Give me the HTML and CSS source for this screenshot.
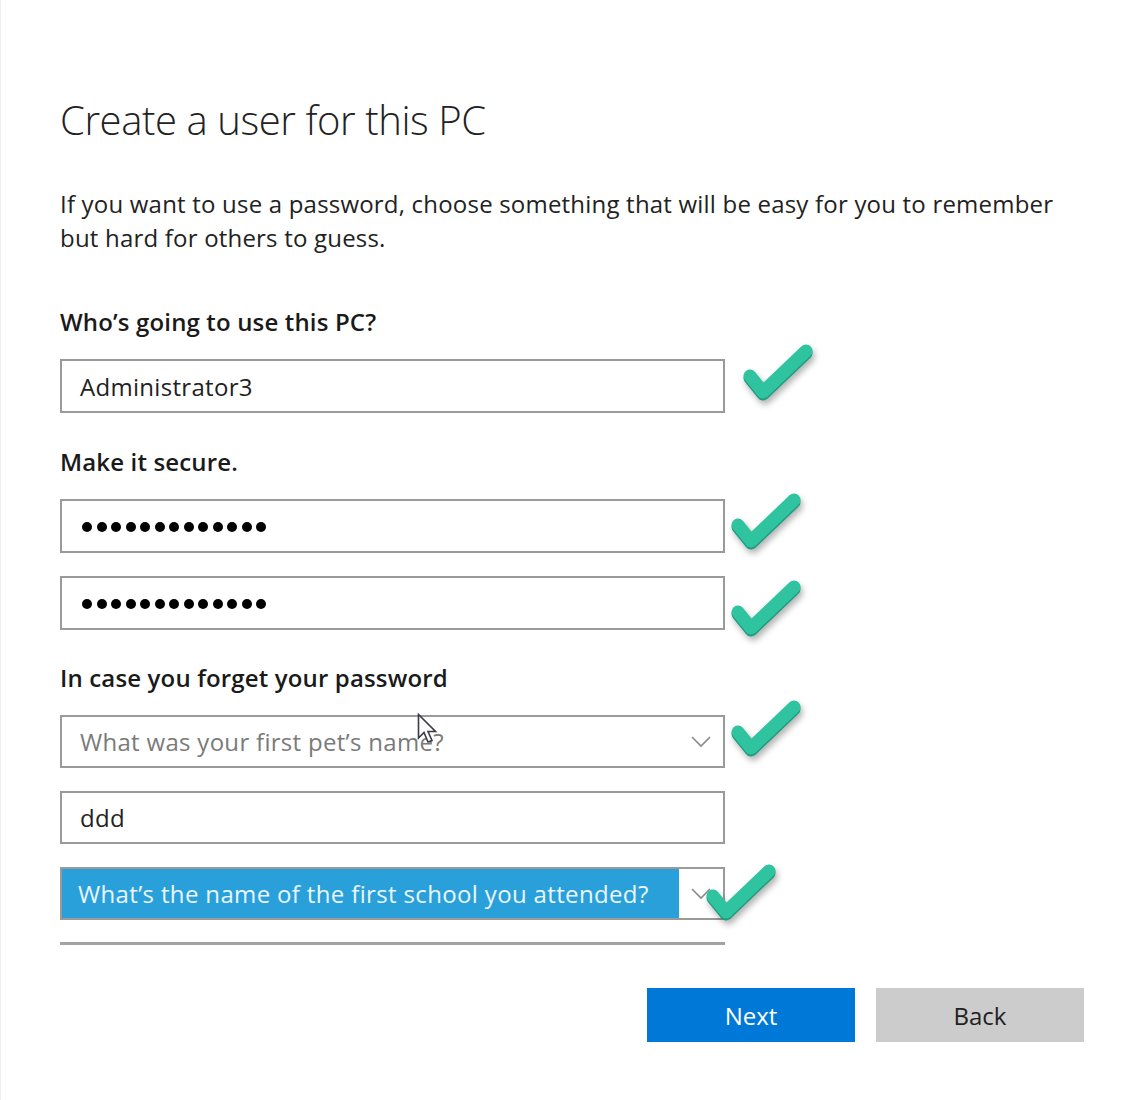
FILE: index.html
```html
<!DOCTYPE html>
<html lang="en">
<head>
<meta charset="utf-8">
<title>Create a user for this PC</title>
<link rel="stylesheet" href="styles.css">
</head>
<body>
<main class="page">
  <h1 class="title">Create a user for this PC</h1>
  <p class="intro">If you want to use a password, choose something that will be easy for you to remember but hard for others to guess.</p>

  <div class="label label-who">Who’s going to use this PC?</div>
  <div class="field">
    <div class="box">Administrator3</div>
    <svg class="check check-1" viewBox="0 0 80 70" width="80" height="70" aria-hidden="true"><path class="ck-side" d="M10 38 L23 54 L66 13"/><path class="ck-top" d="M10 36 L23 52 L66 11"/></svg>
  </div>

  <div class="label label-secure">Make it secure.</div>
  <div class="field">
    <div class="box" aria-label="password"><span class="dots"><i></i><i></i><i></i><i></i><i></i><i></i><i></i><i></i><i></i><i></i><i></i><i></i><i></i></span></div>
    <svg class="check check-2" viewBox="0 0 80 70" width="80" height="70" aria-hidden="true"><path class="ck-side" d="M10 38 L23 54 L66 13"/><path class="ck-top" d="M10 36 L23 52 L66 11"/></svg>
  </div>
  <div class="field gap">
    <div class="box" aria-label="confirm password"><span class="dots"><i></i><i></i><i></i><i></i><i></i><i></i><i></i><i></i><i></i><i></i><i></i><i></i><i></i></span></div>
    <svg class="check check-3" viewBox="0 0 80 70" width="80" height="70" aria-hidden="true"><path class="ck-side" d="M10 38 L23 54 L66 13"/><path class="ck-top" d="M10 36 L23 52 L66 11"/></svg>
  </div>

  <div class="label label-forget">In case you forget your password</div>
  <div class="field">
    <div class="box short select placeholder"><span class="sel-text">What was your first pet’s name?</span>
      <span class="chev"><svg viewBox="0 0 20 12" width="20" height="12"><path d="M1 1 L10 10 L19 1"/></svg></span>
    </div>
    <svg class="cursor" viewBox="0 0 22 32" width="22" height="32" aria-hidden="true"><path d="M1.5 1.5 L1.5 25 L7 19.5 L11 29 L15 27.5 L11 18.5 L18.5 18.5 Z"/></svg>
    <svg class="check check-4" viewBox="0 0 80 70" width="80" height="70" aria-hidden="true"><path class="ck-side" d="M10 38 L23 54 L66 13"/><path class="ck-top" d="M10 36 L23 52 L66 11"/></svg>
  </div>
  <div class="field gap">
    <div class="box short">ddd</div>
  </div>
  <div class="field gap">
    <div class="box short select selected"><span class="sel-text">What’s the name of the first school you attended?</span>
      <span class="chev"><svg viewBox="0 0 20 12" width="20" height="12"><path d="M1 1 L10 10 L19 1"/></svg></span>
    </div>
    <svg class="check check-5" viewBox="0 0 80 70" width="80" height="70" aria-hidden="true"><path class="ck-side" d="M10 38 L23 54 L66 13"/><path class="ck-top" d="M10 36 L23 52 L66 11"/></svg>
  </div>
  <div class="rule"></div>

  <div class="actions">
    <button class="btn btn-next">Next</button>
    <button class="btn btn-back">Back</button>
  </div>
</main>
</body>
</html>
```
FILE: styles.css
```css
html, body {
  margin: 0;
  padding: 0;
  background: #ffffff;
}
body {
  font-family: "Open Sans", "Noto Sans", "Liberation Sans", sans-serif;
  color: #1f1f1f;
  border-left: 1px solid #f0f0f0;
  min-height: 1100px;
  box-sizing: border-box;
}
.page {
  padding: 95px 52px 0 59px;
}
.title {
  margin: 0;
  font-weight: 300;
  font-size: 40px;
  line-height: 50px;
  color: #222222;
  letter-spacing: -0.4px;
}
.intro {
  margin: 42px 0 0;
  font-size: 24px;
  line-height: 34px;
  color: #222222;
  max-width: 1020px;
  letter-spacing: 0.2px;
}
.label {
  font-weight: 600;
  font-size: 24px;
  line-height: 34px;
  color: #1a1a1a;
  letter-spacing: 0.15px;
}
.label-who { margin-top: 50px; }
.label-secure { margin-top: 32px; }
.label-forget { margin-top: 31px; }
.field {
  position: relative;
  width: 665px;
  margin-top: 20px;
}
.field.gap { margin-top: 23px; }
.box {
  box-sizing: border-box;
  height: 54px;
  border: 2px solid #9a9a9a;
  background: #fff;
  display: flex;
  align-items: center;
  padding: 0 18px;
  font-size: 24px;
  color: #222;
  letter-spacing: 0.3px;
}
.box.short { height: 53px; }
.dots {
  display: flex;
  gap: 4.5px;
  padding-left: 2px;
  margin-top: 2px;
}
.dots i {
  display: block;
  width: 10px;
  height: 10px;
  border-radius: 50%;
  background: #000;
}
.select {
  justify-content: space-between;
  padding-right: 0;
}
.placeholder .sel-text { color: #7a7a7a; }
.chev {
  width: 44px;
  align-self: stretch;
  display: flex;
  align-items: center;
  justify-content: center;
  background: #fff;
}
.chev svg path {
  fill: none;
  stroke: #8a8a8a;
  stroke-width: 1.6;
}
.selected {
  padding-left: 0;
}
.selected .sel-text {
  flex: 1;
  align-self: stretch;
  display: flex;
  align-items: center;
  padding-left: 16px;
  background: #29a0da;
  color: #eaf6fd;
  letter-spacing: 0.35px;
}
.rule {
  width: 665px;
  height: 3px;
  margin-top: 22px;
  background: #a3a3a3;
}
.check {
  position: absolute;
  filter: drop-shadow(2px 4px 3px rgba(0, 0, 0, 0.3));
}
.check path {
  fill: none;
  stroke-width: 13;
  stroke-linecap: round;
  stroke-linejoin: round;
}
.ck-side { stroke: #1b9d7f; }
.ck-top { stroke: #2fc3a0; }
.check-1 { left: 680px; top: -19px; }
.check-2 { left: 668px; top: -10px; }
.check-3 { left: 668px; top: 0; }
.check-4 { left: 668px; top: -19px; }
.check-5 { left: 643px; top: -7px; }
.cursor {
  position: absolute;
  left: 357px;
  top: -2px;
}
.cursor path {
  fill: #ffffff;
  stroke: #3a3a4a;
  stroke-width: 1.6;
  stroke-linejoin: miter;
}
.actions {
  display: flex;
  justify-content: flex-end;
  gap: 21px;
  margin-top: 43px;
}
.btn {
  width: 208px;
  height: 54px;
  border: none;
  font-family: inherit;
  font-size: 24px;
  letter-spacing: 0;
  padding: 0;
}
.btn-next {
  background: #0078d7;
  color: #ffffff;
}
.btn-back {
  background: #cccccc;
  color: #1f1f1f;
}
```
